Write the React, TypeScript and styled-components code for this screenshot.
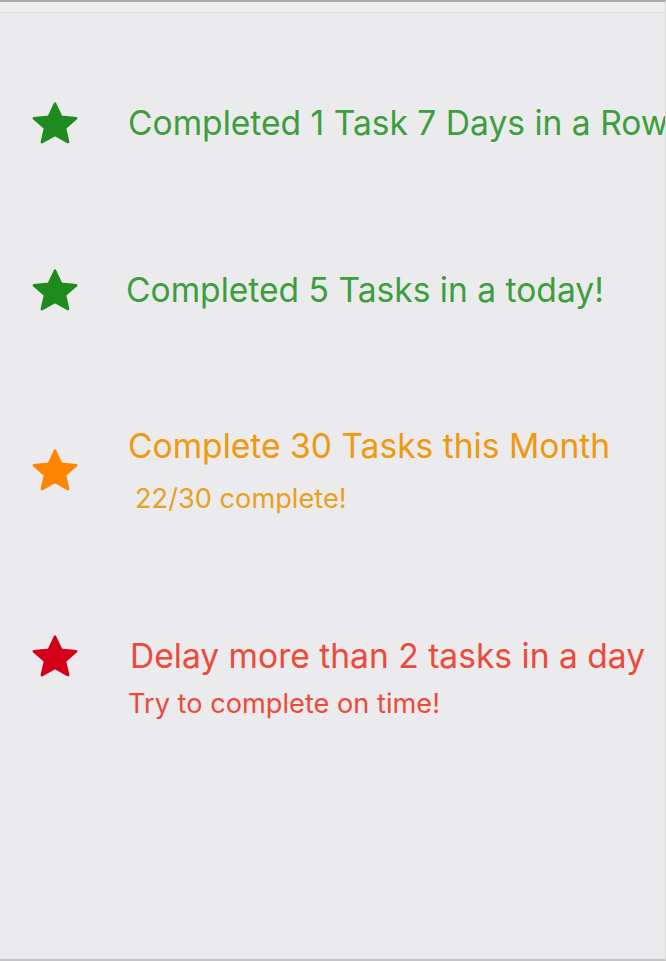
import React from "react";
import styled, { createGlobalStyle } from "styled-components";

const Global = createGlobalStyle`
  html, body { margin: 0; padding: 0; background: #ebebed; }
  * { box-sizing: border-box; }
`;

const Screen = styled.div`
  width: 666px;
  height: 961px;
  background: #ebebed;
  border-top: 2px solid #a9a9a9;
  border-bottom: 2px solid #c4c4c4;
  border-right: 1px solid #dadada;
  overflow: hidden;
  font-family: Inter, "Liberation Sans", sans-serif;
`;

const TopRule = styled.div`
  height: 11px;
  border-bottom: 1px solid #e0e0e2;
  background: #ededef;
`;

const List = styled.div`
  display: flex;
  flex-direction: column;
`;

const Row = styled.div<{ $top: number; $align: string }>`
  display: flex;
  align-items: ${(p) => p.$align};
  margin-top: ${(p) => p.$top}px;
  height: 120px;
  white-space: nowrap;
`;

const StarCell = styled.div`
  width: 128px;
  height: 42px;
  flex: none;
  display: flex;
  align-items: center;
  padding-left: 31px;
`;

const TextBlock = styled.div<{ $gap: number }>`
  display: flex;
  flex-direction: column;
  gap: ${(p) => p.$gap}px;
`;

const Title = styled.div<{ $color: string; $indent?: number }>`
  font-size: 33.6px;
  line-height: 42px;
  color: ${(p) => p.$color};
  margin-left: ${(p) => p.$indent ?? 0}px;
`;

const Sub = styled.div<{ $color: string; $indent?: number }>`
  font-size: 27.2px;
  line-height: 34px;
  font-weight: 400;
  color: ${(p) => p.$color};
  margin-left: ${(p) => p.$indent ?? 0}px;
`;

const Star = ({ color }: { color: string }) => (
  <svg width="48" height="42" viewBox="-4 -4 108 99" preserveAspectRatio="none">
    <path
      d="M50 0 L63.81 30.99 L97.55 34.55 L72.35 57.26 L79.39 90.45 L50 73.5 L20.61 90.45 L27.65 57.26 L2.45 34.55 L36.19 30.99 Z"
      fill={color}
      stroke={color}
      strokeWidth="6"
      strokeLinejoin="round"
    />
  </svg>
);

export default function App() {
  return (
    <>
      <Global />
      <Screen>
        <TopRule />
        <List>
          <Row $top={50} $align="center">
            <StarCell>
              <Star color="#1f8b1f" />
            </StarCell>
            <TextBlock $gap={0}>
              <Title $color="#3c9e3c">Completed 1 Task 7 Days in a Row</Title>
            </TextBlock>
          </Row>
          <Row $top={47} $align="center">
            <StarCell>
              <Star color="#1f8b1f" />
            </StarCell>
            <TextBlock $gap={0}>
              <Title $color="#3c9e3c" $indent={-2}>
                Completed 5 Tasks in a today!
              </Title>
            </TextBlock>
          </Row>
          <Row $top={60} $align="center">
            <StarCell>
              <Star color="#ff8400" />
            </StarCell>
            <TextBlock $gap={15}>
              <Title $color="#f0980e">Complete 30 Tasks this Month</Title>
              <Sub $color="#e8a020" $indent={7}>
                22/30 complete!
              </Sub>
            </TextBlock>
          </Row>
          <Row $top={105} $align="flex-start">
            <StarCell>
              <Star color="#d4001a" />
            </StarCell>
            <TextBlock $gap={10}>
              <Title $color="#ec4a3a" $indent={2}>
                Delay more than 2 tasks in a day
              </Title>
              <Sub $color="#ec4a3a">Try to complete on time!</Sub>
            </TextBlock>
          </Row>
        </List>
      </Screen>
    </>
  );
}
